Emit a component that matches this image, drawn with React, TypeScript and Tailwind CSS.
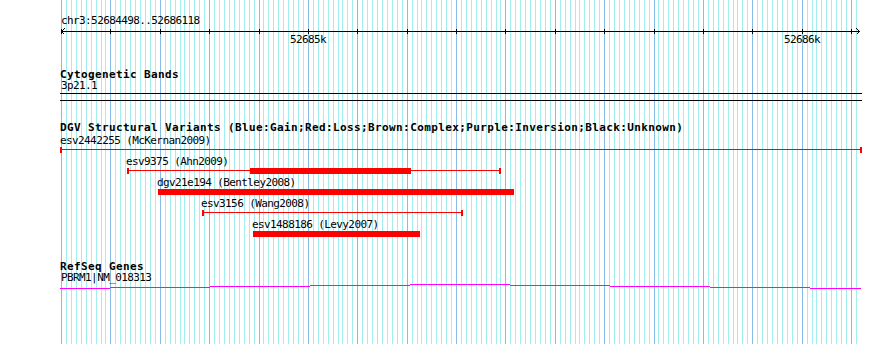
const X0 = 61
const MINOR = 4.9375

type Feature = {
  label: string
  start: number
  end: number
  kind: 'thin' | 'thick'
  thick?: [number, number]
}

const variants: Feature[] = [
  { label: 'esv2442255 (McKernan2009)', start: 60, end: 862, kind: 'thin' },
  { label: 'esv9375 (Ahn2009)', start: 127, end: 501, kind: 'thin', thick: [250, 411] },
  { label: 'dgv21e194 (Bentley2008)', start: 158, end: 514, kind: 'thick' },
  { label: 'esv3156 (Wang2008)', start: 202, end: 463, kind: 'thin' },
  { label: 'esv1488186 (Levy2007)', start: 253, end: 420, kind: 'thick' },
]

// gene line steps: [from, to, y]
const geneSteps: [number, number, number][] = [
  [60, 110, 288],
  [110, 210, 287],
  [210, 310, 286],
  [310, 410, 285],
  [410, 510, 284],
  [510, 610, 285],
  [610, 710, 286],
  [710, 810, 287],
  [810, 861, 288],
]

function Grid() {
  const minor = Array.from({ length: 162 }, (_, i) => Math.round(X0 + i * MINOR))
  const major = Array.from({ length: 17 }, (_, i) => Math.round(X0 + i * MINOR * 10))
  return (
    <svg className="absolute inset-0" width={890} height={344} shapeRendering="crispEdges">
      {minor.map(x => (
        <rect key={'m' + x} x={x} y={0} width={1} height={344} fill="#a2eeee" />
      ))}
      {major.map(x => (
        <rect key={'M' + x} x={x} y={0} width={1} height={344} fill="#88bce8" />
      ))}
    </svg>
  )
}

function Ruler() {
  const ticks = Array.from({ length: 17 }, (_, i) => Math.round(X0 + i * MINOR * 10))
  const labels = [
    { text: '52685k', x: 308 },
    { text: '52686k', x: 802 },
  ]
  return (
    <div>
      <div className="mt-[15px] h-[11px] text-[11px] leading-[11px] tracking-[-0.6px] pl-px">chr3:52684498..52686118</div>
      <svg width={890} height={8} className="block -ml-[60px] overflow-visible" shapeRendering="crispEdges">
        <g transform="translate(0,-26)">
          <rect x={61} y={31} width={799} height={1} fill="#000" />
          {ticks.map(x => (
            <rect key={x} x={x} y={29} width={1} height={5} fill="#000" />
          ))}
          <polyline points="64.5,28.5 61.5,31.5 64.5,34.5" fill="none" stroke="#000" strokeWidth={1} />
          <polyline points="856.5,28.5 859.5,31.5 856.5,34.5" fill="none" stroke="#000" strokeWidth={1} />
        </g>
      </svg>
      <div className="relative h-[11px] text-[11px] leading-[11px] tracking-[-0.6px]">
        {labels.map(l => (
          <span key={l.text} className="absolute top-0" style={{ left: l.x - 60 - 18 }}>
            {l.text}
          </span>
        ))}
      </div>
    </div>
  )
}

function VariantRow({ f }: { f: Feature }) {
  const off = 60
  return (
    <div className="h-[21px]">
      <div className="h-[11px] text-[11px] leading-[11px] tracking-[-0.6px] whitespace-nowrap" style={{ paddingLeft: Math.max(0, f.start - 1 - off) }}>
        {f.label}
      </div>
      <div className="relative mt-px h-[6px]">
        {f.kind === 'thin' && (
          <>
            <div className="absolute top-[2px] h-px bg-[#ff0000]" style={{ left: f.start - off, width: f.end - f.start }} />
            <div className="absolute top-0 h-[6px] w-[2px] bg-[#ff0000]" style={{ left: f.start - off }} />
            <div className="absolute top-0 h-[6px] w-[2px] bg-[#ff0000]" style={{ left: f.end - 2 - off }} />
          </>
        )}
        {f.kind === 'thick' && (
          <div className="absolute top-0 h-[6px] bg-[#ff0000]" style={{ left: f.start - off, width: f.end - f.start }} />
        )}
        {f.thick && (
          <div className="absolute top-0 h-[6px] bg-[#ff0000]" style={{ left: f.thick[0] - off, width: f.thick[1] - f.thick[0] }} />
        )}
      </div>
    </div>
  )
}

export default function App() {
  return (
    <div className="relative w-[890px] h-[344px] overflow-hidden bg-white text-black font-['DejaVu_Sans_Mono',monospace]">
      <Grid />
      <div className="relative flex flex-col pl-[60px]">
        <Ruler />

        <section className="mt-[23px]">
          <h2 className="h-[12px] pt-px text-[11px] leading-[11px] font-bold tracking-[0.38px]">Cytogenetic Bands</h2>
          <p className="h-[11px] text-[11px] leading-[11px] tracking-[-0.6px] pl-px">3p21.1</p>
          <div className="mt-[2px] h-[8px] w-[802px] border-y border-black" />
        </section>

        <section className="mt-[20px]">
          <h2 className="h-[12px] pt-px text-[11px] leading-[11px] font-bold tracking-[0.38px] whitespace-nowrap">
            DGV Structural Variants (Blue:Gain;Red:Loss;Brown:Complex;Purple:Inversion;Black:Unknown)
          </h2>
          <div className="mt-[2px]">
            {variants.map(f => (
              <VariantRow key={f.label} f={f} />
            ))}
          </div>
        </section>

        <section className="mt-[20px]">
          <h2 className="h-[12px] pt-px text-[11px] leading-[11px] font-bold tracking-[0.38px]">RefSeq Genes</h2>
          <p className="h-[11px] text-[11px] leading-[11px] tracking-[-0.6px] pl-px">PBRM1|NM_018313</p>
          <svg width={890} height={8} className="block -ml-[60px]" shapeRendering="crispEdges">
            {geneSteps.map(([a, b, y]) => (
              <rect key={a} x={a} y={y - 283} width={b - a} height={1} fill="#ff00ff" />
            ))}
          </svg>
        </section>
      </div>
    </div>
  )
}
